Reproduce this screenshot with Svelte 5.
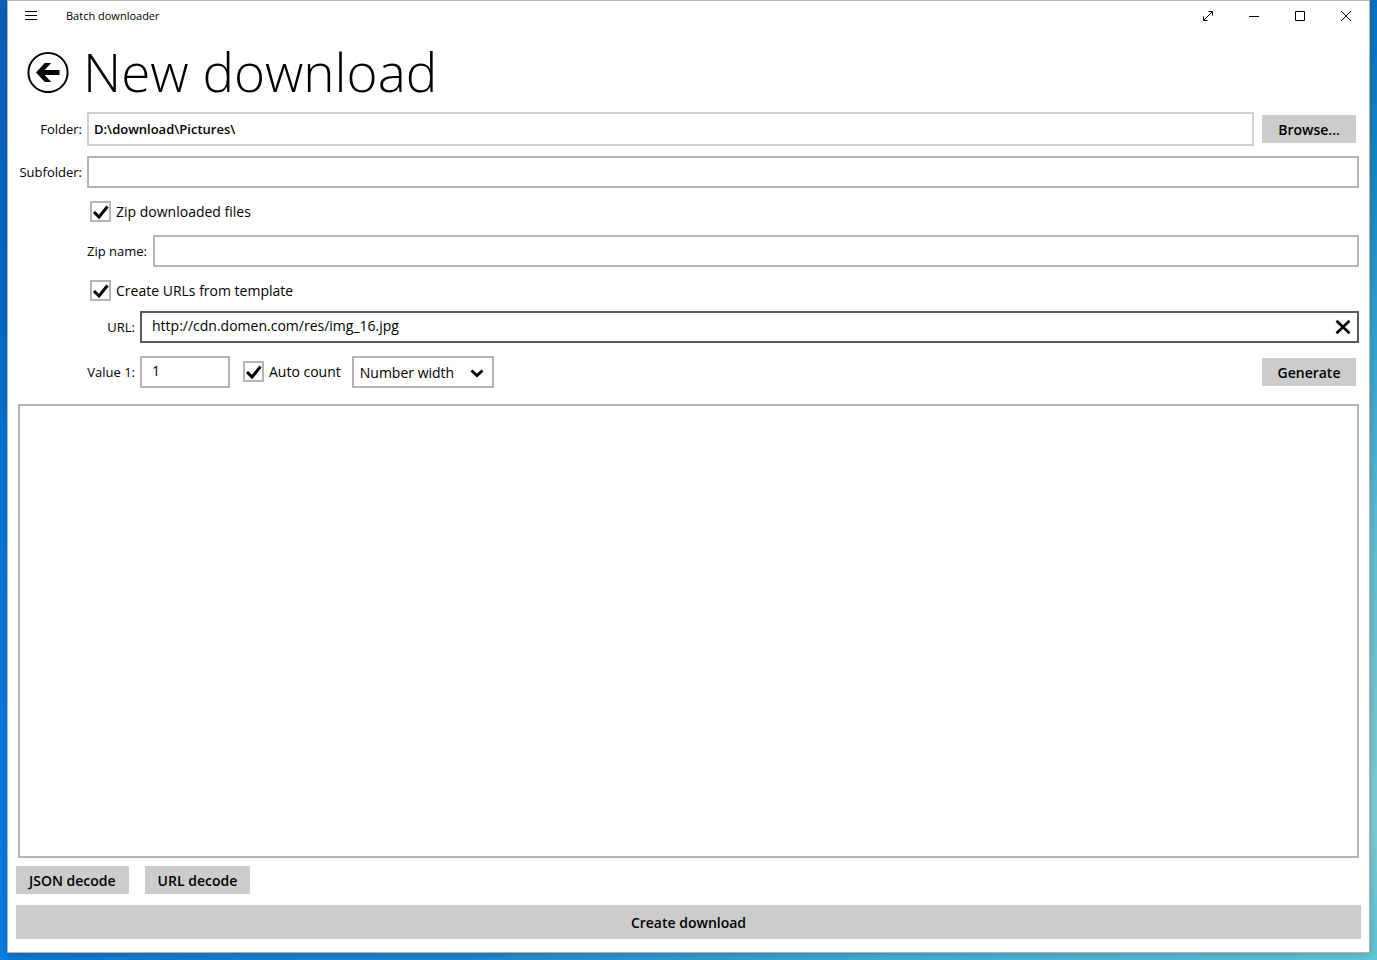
<script>
  let folder = "D:\\download\\Pictures\\";
  let subfolder = "";
  let zip = true;
  let zip_name = "";
  let use_template = true;
  let url = "http://cdn.domen.com/res/img_16.jpg";
  let value = "1";
  let auto_count = true;
  let number_width = "Number width";
  let links = "";

  function clear_url() {
    url = "";
  }
  function generate() {
    links = links ? links + "\n" + url : url;
  }
  function url_decode() {
    links = decodeURIComponent(links);
  }
  function json_decode() {
    links = links.replaceAll("\\/", "/");
  }
</script>

<div class="desktop">
  <main class="window">
    <header class="titlebar">
      <button class="caption" aria-label="Menu">
        <svg width="12" height="10" viewBox="0 0 12 10">
          <path d="M0 .5H12M0 4.5H12M0 8.5H12" />
        </svg>
      </button>
      <span class="app-name">Batch downloader</span>
      <button class="caption" aria-label="Full screen">
        <svg width="12" height="12" viewBox="0 0 12 12">
          <path d="M1.5 10.5L10.5 1.5M6.5 1.5H10.5V5.5M1.5 6.5V10.5H5.5" />
        </svg>
      </button>
      <button class="caption" aria-label="Minimize">
        <svg width="10" height="10" viewBox="0 0 10 10">
          <path d="M0 5.5H10" />
        </svg>
      </button>
      <button class="caption" aria-label="Maximize">
        <svg width="10" height="10" viewBox="0 0 10 10">
          <path d="M.5 .5H9.5V9.5H.5Z" />
        </svg>
      </button>
      <button class="caption" aria-label="Close">
        <svg width="10" height="10" viewBox="0 0 10 10">
          <path d="M0 0L10 10M10 0L0 10" />
        </svg>
      </button>
    </header>

    <div class="heading">
      <button class="back" aria-label="Back">
        <svg width="42" height="42" viewBox="0 0 42 42">
          <circle cx="21" cy="21.5" r="19.6" fill="none" stroke="#000" stroke-width="2" />
          <path d="M9 21.4L17.8 11.9H24.2L17.6 18.9H32.5V23.9H17.6L24.2 30.9H17.8Z" />
        </svg>
      </button>
      <h1>New download</h1>
    </div>

    <form on:submit|preventDefault>
      <div class="row folder-row">
        <label class="name" for="folder">Folder:</label>
        <input class="folder" id="folder" type="text" readonly value={folder} />
        <button class="btn side" type="button">Browse...</button>
      </div>
      <div class="row">
        <label class="name" for="subfolder">Subfolder:</label>
        <input id="subfolder" type="text" bind:value={subfolder} />
      </div>

      <div class="indent">
        <label class="check">
          <input type="checkbox" bind:checked={zip} />
          <svg width="21" height="21" viewBox="0 0 21 21"><path d="M4 11L9 16L17.5 5.5" /></svg>
          Zip downloaded files
        </label>
        <div class="row">
          <label class="zip-label" for="zip-name">Zip name:</label>
          <input id="zip-name" type="text" bind:value={zip_name} />
        </div>
        <label class="check">
          <input type="checkbox" bind:checked={use_template} />
          <svg width="21" height="21" viewBox="0 0 21 21"><path d="M4 11L9 16L17.5 5.5" /></svg>
          Create URLs from template
        </label>
        <div class="row url-row">
          <label class="short" for="url">URL:</label>
          <div class="url-box">
            <input class="url" id="url" type="text" bind:value={url} />
            <button class="clear" type="button" aria-label="Clear" on:click={clear_url}>
              <svg width="16" height="16" viewBox="0 0 16 16"><path d="M1.5 1.8L14.5 14.2M14.5 1.8L1.5 14.2" /></svg>
            </button>
          </div>
        </div>
        <div class="row value-row">
          <label class="short" for="value">Value 1:</label>
          <input class="value" id="value" type="text" bind:value />
          <label class="check auto">
            <input type="checkbox" bind:checked={auto_count} />
            <svg width="21" height="21" viewBox="0 0 21 21"><path d="M4 11L9 16L17.5 5.5" /></svg>
            Auto count
          </label>
          <div class="select-box">
            <select aria-label="Number width" bind:value={number_width}>
              <option>Number width</option>
              <option>1</option>
              <option>2</option>
              <option>3</option>
            </select>
            <svg width="14" height="9" viewBox="0 0 14 9"><path d="M1.5 1.5L7 6.5L12.5 1.5" /></svg>
          </div>
          <button class="btn side" type="button" on:click={generate}>Generate</button>
        </div>
      </div>

      <textarea aria-label="Links" bind:value={links}></textarea>
    </form>

    <footer>
      <div class="tools">
        <button class="btn" on:click={json_decode}>JSON decode</button>
        <button class="btn" on:click={url_decode}>URL decode</button>
      </div>
      <button class="btn create">Create download</button>
    </footer>
  </main>
</div>

<style>
  :global(body) {
    margin: 0;
  }
  .desktop {
    display: flex;
    box-sizing: border-box;
    min-height: 100vh;
    padding: 0 7px 7px;
    font-family: "Segoe UI", "Open Sans", "Noto Sans", sans-serif;
    font-size: 13px;
    line-height: 20px;
    color: #000;
    background:
      linear-gradient(#0c62b8, #0a68c4 30%, #0a78d8 60%, #0a7ee0) left / 8px 100% no-repeat,
      linear-gradient(#0a70c8, #1488c8 18%, #38a8d2 38%, #62c0d4 58%, #7ccdd2 85%, #60c4d8) right / 8px 100% no-repeat,
      linear-gradient(90deg, #0a7ad8, #1f8bd4 35%, #42b0da 65%, #60c8dc);
  }
  .window {
    display: flex;
    flex: 1;
    flex-direction: column;
    box-sizing: border-box;
    border: 1px solid #b4b4b4;
    background: #fff;
    box-shadow: 0 2px 8px rgba(0, 0, 0, 0.2);
  }
  button {
    padding: 0;
    border: 0;
    background: none;
    color: inherit;
    font: inherit;
  }
  svg {
    display: block;
  }

  .titlebar {
    display: flex;
    align-items: center;
    height: 30px;
  }
  .caption {
    display: flex;
    align-items: center;
    justify-content: center;
    width: 46px;
    height: 30px;
  }
  .caption svg {
    fill: none;
    stroke: #000;
  }
  .app-name {
    flex: 1;
    padding-left: 12px;
    font-size: 11px;
  }

  .heading {
    display: flex;
    align-items: center;
    gap: 14px;
    height: 81px;
    padding-left: 19px;
  }
  h1 {
    margin: 0;
    font-size: 53px;
    font-weight: 300;
    line-height: 80px;
  }

  form {
    display: flex;
    flex: 1;
    flex-direction: column;
    padding: 0 10px;
  }
  .row {
    display: flex;
    align-items: center;
    gap: 5px;
  }
  .folder-row {
    margin-bottom: 10px;
  }
  .name {
    width: 64px;
    text-align: right;
  }
  .short {
    width: 48px;
    text-align: right;
  }
  .zip-label {
    width: 61px;
  }
  input[type="text"] {
    flex: 1;
    box-sizing: border-box;
    min-width: 0;
    height: 32px;
    padding: 0 10px 3px;
    border: 2px solid #b4b4b4;
    background: #fff;
    color: #000;
    font: inherit;
    font-size: 14px;
  }
  input.folder {
    height: 34px;
    padding: 0 5px;
    border-color: #d0d0d0;
    font-size: 13px;
    font-weight: 600;
  }
  .btn {
    height: 28px;
    padding: 2px 13px 0;
    background: #ccc;
    font-size: 14px;
    font-weight: 600;
  }
  .side {
    width: 94px;
    margin: 0 3px;
  }

  .indent {
    padding-left: 69px;
  }
  .check {
    display: grid;
    grid-template-columns: 21px auto;
    align-items: center;
    justify-content: start;
    gap: 5px;
    height: 21px;
    margin: 13px 0 13px 3px;
    font-size: 14px;
  }
  .check input {
    grid-area: 1 / 1;
    box-sizing: border-box;
    width: 21px;
    height: 21px;
    margin: 0;
    border: 2px solid #b4b4b4;
    appearance: none;
  }
  .check svg {
    grid-area: 1 / 1;
    visibility: hidden;
    fill: none;
    stroke: #000;
    stroke-width: 3;
    pointer-events: none;
  }
  .check input:checked + svg {
    visibility: visible;
  }
  .auto {
    margin: 0 6px 1px 8px;
  }
  .url-row {
    margin: -3px 0 13px;
  }
  .url-box {
    display: flex;
    flex: 1;
    position: relative;
  }
  input.url {
    padding-right: 32px;
    border-color: #5a5a5a;
  }
  .clear {
    position: absolute;
    top: 2px;
    right: 2px;
    display: grid;
    place-items: center;
    width: 28px;
    height: 28px;
  }
  .clear svg,
  .select-box svg {
    fill: none;
    stroke: #000;
    stroke-width: 3;
  }
  .clear svg {
    stroke-width: 2.6;
  }
  input.value {
    flex: none;
    width: 90px;
  }
  .select-box {
    position: relative;
  }
  select {
    display: block;
    width: 142px;
    height: 32px;
    padding: 2px 6px 0;
    border: 2px solid #b4b4b4;
    border-radius: 0;
    background: #fff;
    color: #000;
    font: inherit;
    font-size: 14px;
    appearance: none;
  }
  .select-box svg {
    position: absolute;
    top: 13px;
    right: 10px;
    pointer-events: none;
  }
  .value-row .side {
    margin-left: auto;
  }
  textarea {
    flex: 1;
    box-sizing: border-box;
    width: 100%;
    margin: 16px 0 8px;
    padding: 4px 10px;
    border: 2px solid #b4b4b4;
    font: inherit;
    font-size: 14px;
    resize: none;
  }

  footer {
    padding: 0 8px 13px;
  }
  .tools {
    display: flex;
    gap: 16px;
    margin-bottom: 11px;
  }
  .create {
    display: block;
    width: 100%;
    height: 34px;
  }
</style>
